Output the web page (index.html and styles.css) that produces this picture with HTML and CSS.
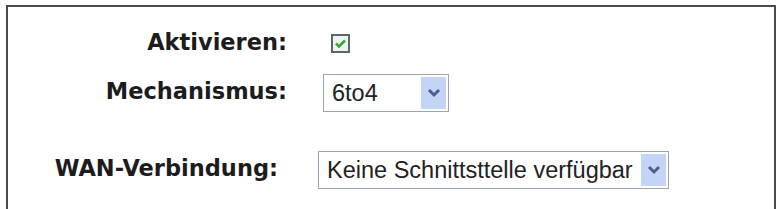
FILE: index.html
```html
<!DOCTYPE html>
<html lang="de">
<head>
    <meta charset="UTF-8">
    <meta name="viewport" content="width=device-width, initial-scale=1.0">
    <title>IPv6 Tunnel</title>
    <link rel="stylesheet" href="styles.css">
</head>
<body>

<div class="panel">
    <div class="form-grid top-grid">
        <div class="label">Aktivieren:</div>
        <div class="field">
            <span class="checkbox">
                <svg width="19" height="19" viewBox="0 0 19 19">
                    <rect x="1" y="1" width="17" height="17" fill="#eef3ee" stroke="#5b6675" stroke-width="2"/>
                    <polyline points="5,9.5 8,12.5 14,6.5" fill="none" stroke="#3aa53a" stroke-width="2.6"/>
                </svg>
            </span>
        </div>

        <div class="label">Mechanismus:</div>
        <div class="field">
            <div class="select select-small">
                <span class="select-text">6to4</span>
                <span class="select-button">
                    <svg width="14" height="10" viewBox="0 0 14 10">
                        <polyline points="2,2 7,7 12,2" fill="none" stroke="#4a5f8f" stroke-width="3"/>
                    </svg>
                </span>
            </div>
        </div>
    </div>

    <div class="form-grid wan-grid">
        <div class="label">WAN-Verbindung:</div>
        <div class="field">
            <div class="select select-wide">
                <span class="select-text">Keine Schnittsttelle verfügbar</span>
                <span class="select-button">
                    <svg width="14" height="10" viewBox="0 0 14 10">
                        <polyline points="2,2 7,7 12,2" fill="none" stroke="#4a5f8f" stroke-width="3"/>
                    </svg>
                </span>
            </div>
        </div>
    </div>
</div>

</body>
</html>
```

FILE: styles.css
```css
body {
    margin: 0;
    background-color: #fff;
    font-family: "DejaVu Sans", Verdana, sans-serif;
    overflow: hidden;
}
.panel {
    margin: 5px 2px 0 6px;
    height: 202px;
    border: 2px solid #4a4a4a;
    border-bottom: none;
}
.form-grid {
    display: grid;
    align-items: center;
}
.top-grid {
    grid-template-columns: 279px auto;
    grid-template-rows: 26px 38px;
    column-gap: 36px;
    row-gap: 17px;
    padding-top: 24px;
}
.wan-grid {
    grid-template-columns: 270px auto;
    grid-template-rows: 38px;
    column-gap: 40px;
    margin-top: 39px;
}
.label {
    text-align: right;
    font-weight: bold;
    font-size: 22.5px;
    color: #1c1c1c;
    padding-bottom: 4px;
}
.field {
    display: flex;
    align-items: center;
}
.checkbox {
    display: flex;
    margin-left: 8px;
    margin-bottom: 2px;
}
.select {
    display: flex;
    align-items: stretch;
    box-sizing: border-box;
    height: 38px;
    border: 1px solid #9aa4b4;
    background-color: #fff;
    font-family: "Liberation Sans", Arial, sans-serif;
    font-size: 23.5px;
    color: #222;
}
.select-small {
    width: 126px;
}
.select-wide {
    width: 351px;
}
.select-text {
    flex: 1;
    display: flex;
    align-items: center;
    padding-left: 8px;
    white-space: nowrap;
}
.select-button {
    display: flex;
    align-items: center;
    justify-content: center;
    width: 25px;
    margin: 2px;
    background-color: #c4d4f6;
}
```
